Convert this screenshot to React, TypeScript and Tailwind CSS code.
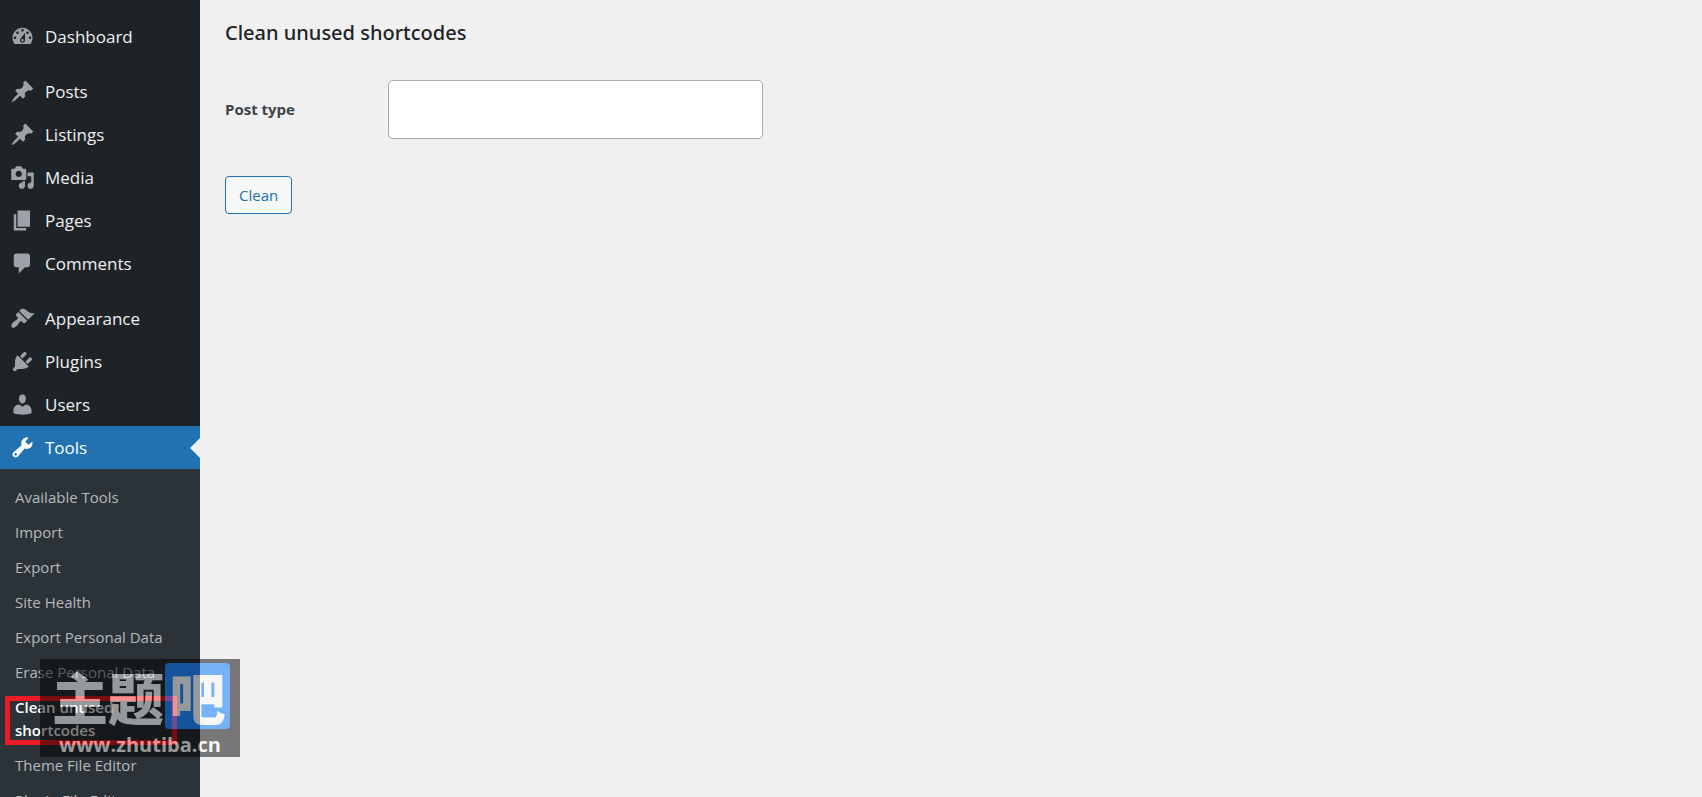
type Item = { label: string; path: string; active?: boolean };

const pin =
  "M10.44 3.02l1.82-1.82 6.36 6.35-1.83 1.82c-1.05-.68-2.48-.57-3.41.36l-.75.75c-.92.93-1.04 2.35-.35 3.41l-1.83 1.82-2.41-2.41-2.8 2.79c-.42.42-3.38 2.71-3.8 2.29s1.86-3.39 2.28-3.81l2.79-2.79L4.1 9.36l1.83-1.82c1.05.69 2.48.57 3.4-.36l.75-.75c.93-.92 1.05-2.35.36-3.41z";

const groups: Item[][] = [
  [
    {
      label: "Dashboard",
      path: "M3.76 16h12.48c1.1-1.37 1.76-3.11 1.76-5 0-4.42-3.58-8-8-8s-8 3.58-8 8c0 1.89.66 3.63 1.76 5zM10 4c.55 0 1 .45 1 1s-.45 1-1 1-1-.45-1-1 .45-1 1-1zM6 6c.55 0 1 .45 1 1s-.45 1-1 1-1-.45-1-1 .45-1 1-1zm8 0c.55 0 1 .45 1 1s-.45 1-1 1-1-.45-1-1 .45-1 1-1zm-5.37 5.55L12 7v6c0 1.1-.9 2-2 2s-2-.9-2-2c0-.57.24-1.08.63-1.45zM4 10c.55 0 1 .45 1 1s-.45 1-1 1-1-.45-1-1 .45-1 1-1zm12 0c.55 0 1 .45 1 1s-.45 1-1 1-1-.45-1-1 .45-1 1-1zm-5 3c0-.55-.45-1-1-1s-1 .45-1 1 .45 1 1 1 1-.45 1-1z",
    },
  ],
  [
    { label: "Posts", path: pin },
    { label: "Listings", path: pin },
    {
      label: "Media",
      path: "M13 11V4c0-.55-.45-1-1-1h-1.67L9 1H5L3.67 3H2c-.55 0-1 .45-1 1v7c0 .55.45 1 1 1h10c.55 0 1-.45 1-1zM7 4.5c1.38 0 2.5 1.12 2.5 2.5S8.38 9.5 7 9.5 4.5 8.38 4.5 7 5.62 4.5 7 4.5zM14 6h5v10.5c0 1.38-1.12 2.5-2.5 2.5S14 17.88 14 16.5s1.12-2.5 2.5-2.5c.17 0 .34.02.5.05V9h-3V6zm-4 8.05V13h2v3.5c0 1.38-1.12 2.5-2.5 2.5S7 17.88 7 16.5 8.12 14 9.5 14c.17 0 .34.02.5.05z",
    },
    { label: "Pages", path: "M6 15V2h10v13H6zm-1 1h8v2H3V5h2v11z" },
    {
      label: "Comments",
      path: "M5 2h9c1.1 0 2 .9 2 2v7c0 1.1-.9 2-2 2h-2l-5 5v-5H5c-1.1 0-2-.9-2-2V4c0-1.1.9-2 2-2z",
    },
  ],
  [
    {
      label: "Appearance",
      path: "M14.48 11.06L7.41 3.99l1.5-1.5c.5-.56 2.3-.47 3.51.32 1.21.8 1.43 1.28 2.91 2.1 1.18.64 2.45 1.26 4.45.85zm-.71.71L6.7 4.7 4.93 6.47c-.39.39-.39 1.02 0 1.41l1.06 1.06c.39.39.39 1.03 0 1.42-.6.6-1.43 1.11-2.21 1.69-.35.26-.7.53-1.01.84C1.43 14.23.4 16.08 1.4 17.07c.99 1 2.84-.03 4.18-1.36.31-.31.58-.66.85-1.02.57-.78 1.08-1.61 1.69-2.21.39-.39 1.02-.39 1.41 0l1.06 1.06c.39.39 1.02.39 1.41 0z",
    },
    {
      label: "Plugins",
      path: "M13.11 4.36L9.87 7.6 8 5.73l3.24-3.24c.35-.34 1.05-.2 1.56.32.52.51.66 1.21.31 1.55zm-8 1.77l.91-1.12 9.01 9.01-1.19.84c-.71.71-2.63 1.16-3.82 1.16H6.14L4.9 17.26c-.59.59-1.54.59-2.12 0-.59-.58-.59-1.53 0-2.12l1.24-1.24v-3.88c0-1.13.4-3.19 1.09-3.89zm7.26 3.97l3.24-3.24c.34-.35 1.04-.21 1.55.31.52.51.66 1.21.31 1.55l-3.24 3.25z",
    },
    {
      label: "Users",
      path: "M10 9.25c-2.27 0-2.73-3.44-2.73-3.44C7 4.02 7.82 2 9.97 2c2.16 0 2.98 2.02 2.71 3.81 0 0-.41 3.44-2.68 3.44zm0 2.57L12.72 10c2.39 0 4.52 2.33 4.52 4.53v2.49s-3.65 1.13-7.24 1.13c-3.65 0-7.24-1.13-7.24-1.13v-2.49c0-2.25 1.94-4.48 4.47-4.48z",
    },
    {
      label: "Tools",
      active: true,
      path: "M16.68 9.77c-1.34 1.34-3.3 1.67-4.95.99l-5.41 6.52c-.99.99-2.59.99-3.58 0s-.99-2.59 0-3.57l6.52-5.42c-.68-1.65-.35-3.61.99-4.95 1.28-1.28 3.12-1.62 4.72-1.06l-2.89 2.89 2.82 2.82 2.86-2.87c.53 1.58.18 3.39-1.08 4.65zM3.81 16.21c.4.39 1.04.39 1.43 0 .4-.4.4-1.04 0-1.43-.39-.4-1.03-.4-1.43 0-.39.39-.39 1.03 0 1.43z",
    },
  ],
];

const submenu = [
  "Available Tools",
  "Import",
  "Export",
  "Site Health",
  "Export Personal Data",
  "Erase Personal Data",
  "Clean unused shortcodes",
  "Theme File Editor",
  "Plugin File Editor",
];

const current = "Clean unused shortcodes";

function MenuItem({ item }: { item: Item }) {
  return (
    <li>
      <a
        href="#"
        className={
          item.active
            ? "relative flex h-[43px] items-center gap-2.5 bg-[#2271b1] pl-2.5 text-white"
            : "flex h-[43px] items-center gap-2.5 pl-2.5 text-[#f0f0f1]"
        }
      >
        <svg
          viewBox="0 0 20 20"
          aria-hidden="true"
          className={
            item.active
              ? "size-[25px] fill-white"
              : "size-[25px] fill-[#9ca2a7]"
          }
        >
          <path fillRule="evenodd" d={item.path} />
        </svg>
        {item.label}
        {item.active && (
          <svg
            viewBox="0 0 10 20"
            aria-hidden="true"
            className="absolute top-3 right-0 h-5 w-2.5 fill-[#f0f0f0]"
          >
            <path d="M10 0v20L0 10z" />
          </svg>
        )}
      </a>
    </li>
  );
}

function Watermark() {
  return (
    <div className="absolute top-[659px] left-10 flex h-[98px] w-[200px] flex-col items-center gap-1 bg-black pt-1 text-white opacity-50">
      <div className="flex w-full items-center justify-end gap-px pr-2.5 font-['Noto_Sans_CJK_SC',sans-serif] text-[56px] leading-none font-black">
        <span>主题</span>
        <span className="flex h-[66px] w-[65px] items-center justify-center rounded bg-[#0075ff]">
          吧
        </span>
      </div>
      <span className="text-xl leading-6 font-bold">www.zhutiba.cn</span>
    </div>
  );
}

export default function App() {
  return (
    <div className="relative flex h-screen overflow-hidden bg-[#f0f0f0] font-['Open_Sans',sans-serif] text-[#3c434a]">
      <nav className="w-[200px] shrink-0 bg-[#1d2327] pt-[15px]">
        <div className="flex flex-col gap-3 text-[17px]">
          {groups.map((group) => (
            <ul key={group[0].label}>
              {group.map((item) => (
                <MenuItem key={item.label} item={item} />
              ))}
            </ul>
          ))}
        </div>
        <ul className="bg-[#2c3338] pt-[11px] pb-2 text-[15px] leading-[23px]">
          {submenu.map((label) => (
            <li key={label} className="relative">
              {label === current && (
                <span className="absolute top-1.5 left-[5px] h-[49px] w-[172px] border-5 border-[#ed1c24]" />
              )}
              <a
                href="#"
                className={
                  label === current
                    ? "relative block py-1.5 pr-10 pl-[15px] font-semibold text-white"
                    : "block py-1.5 pl-[15px] whitespace-nowrap text-[#b5b9bc]"
                }
              >
                {label}
              </a>
            </li>
          ))}
        </ul>
      </nav>
      <main className="flex-1 px-[25px] pt-[18px]">
        <h1 className="font-['Noto_Sans',sans-serif] text-[20px] leading-[30px] font-medium text-[#1d2327]">
          Clean unused shortcodes
        </h1>
        <form className="mt-8">
          <div className="flex items-center">
            <label
              htmlFor="post-type"
              className="w-[163px] text-[15px] font-bold"
            >
              Post type
            </label>
            <input
              id="post-type"
              type="text"
              className="h-[59px] w-[375px] rounded-[5px] border border-[#aaa] bg-white px-2 text-[15px] outline-none"
            />
          </div>
          <button
            type="button"
            className="mt-[37px] h-[38px] rounded border border-[#2271b1] bg-[#f6f7f7] px-[13px] text-[15px] text-[#2271b1]"
          >
            Clean
          </button>
        </form>
      </main>
      <Watermark />
    </div>
  );
}
